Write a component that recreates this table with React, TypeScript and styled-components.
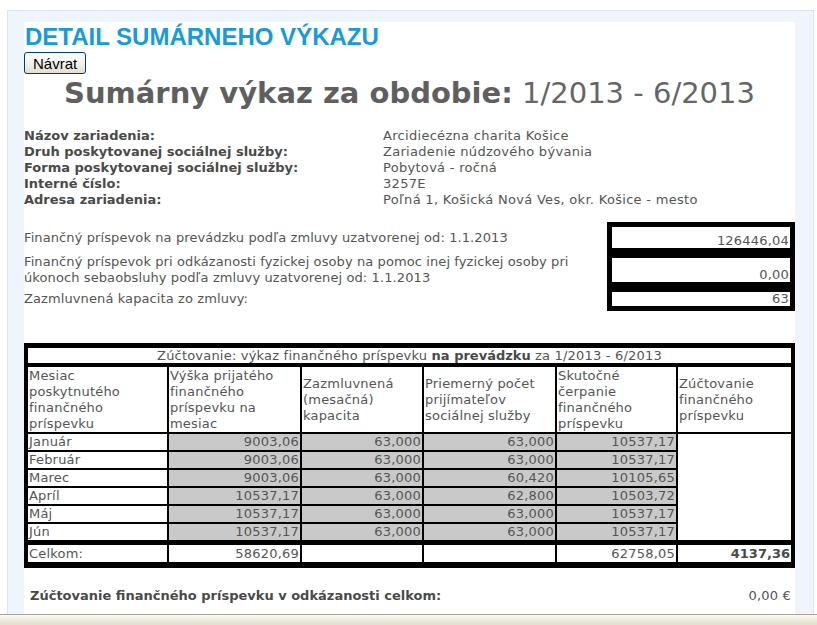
import React from "react";
import styled, { createGlobalStyle } from "styled-components";

const Global = createGlobalStyle`
  html, body { margin: 0; padding: 0; background: #ffffff; }
  body { font-family: "DejaVu Sans", Verdana, sans-serif; }
  #root { height: 100vh; }
`;

const Screen = styled.div`
  height: 100vh;
  display: flex;
  flex-direction: column;
  overflow: hidden;
`;

const Panel = styled.div`
  flex: 1;
  min-height: 0;
  margin: 10px 3px 0 7px;
  border: 1px solid #dce3ea;
  border-bottom: none;
  background: #eef5fc;
  padding: 11px 18px 0 16px;
  display: flex;
  flex-direction: column;
`;

const Content = styled.div`
  flex: 1;
  background: #ffffff;
  color: #555555;
  font-size: 13px;
  line-height: 16px;
  letter-spacing: 0.2px;
`;

const Heading = styled.h1`
  margin: 0;
  padding: 2px 0 0 1px;
  font-family: "Liberation Sans", Arial, sans-serif;
  font-size: 24px;
  line-height: 26px;
  font-weight: bold;
  letter-spacing: 0;
  color: #1a9ad6;
`;

const BackButton = styled.button`
  display: block;
  margin: 2px 0 0 0;
  height: 22px;
  padding: 0 8px;
  font-family: "Liberation Sans", Arial, sans-serif;
  font-size: 15px;
  letter-spacing: 0;
  color: #000;
  border: 1px solid #003c74;
  border-radius: 3px;
  background: linear-gradient(#ffffff 0%, #f3f2ec 50%, #e2ddd0 100%);
  cursor: pointer;
`;

const Title = styled.h2`
  margin: 2px 0 0 0;
  text-align: center;
  font-size: 29px;
  line-height: 34px;
  letter-spacing: 0;
  color: #666666;
  font-weight: normal;
  & b { font-weight: bold; color: #5f5f5f; }
`;

const Info = styled.div`
  margin-top: 18px;
  display: grid;
  grid-template-columns: 359px 1fr;
  line-height: 16px;
`;

const InfoLabel = styled.div`
  font-weight: bold;
  letter-spacing: 0;
  color: #4a4a4a;
`;

const InfoValue = styled.div`
  color: #555555;
  letter-spacing: 0.3px;
`;

const FinTable = styled.table`
  margin-top: 14px;
  width: 100%;
  border-collapse: separate;
  border-spacing: 0;
`;

const FinLabel = styled.td`
  padding: 0;
  vertical-align: middle;
  color: #555555;
  line-height: 16px;
  letter-spacing: 0.1px;
`;

const FinValue = styled.td<{ $h: number }>`
  width: 177px;
  height: ${(p) => p.$h}px;
  padding: 0 1px 0 0;
  border: 5px solid #000;
  text-align: right;
  vertical-align: bottom;
  line-height: 14px;
  color: #555555;
  background: #fff;
`;

const MainTable = styled.table`
  margin-top: 32px;
  width: 100%;
  table-layout: fixed;
  border-collapse: separate;
  border-spacing: 0;
  border-style: solid;
  border-color: #000;
  border-width: 4px 3px 5px 3px;
  color: #555555;
`;

const Cell = styled.td<{
  $align?: "left" | "right" | "center";
  $gray?: boolean;
  $bold?: boolean;
  $total?: boolean;
}>`
  border: 1px solid #000;
  ${(p) => (p.$total ? "border-top-width: 4px; height: 17px;" : "height: 16px;")}
  padding: 0 1px 0 1px;
  line-height: 16px;
  text-align: ${(p) => p.$align || "left"};
  background: ${(p) => (p.$gray ? "#c9c9c9" : "#ffffff")};
  font-weight: ${(p) => (p.$bold ? "bold" : "normal")};
  letter-spacing: ${(p) => (p.$bold ? "0" : "0.2px")};
  color: ${(p) => (p.$bold ? "#4a4a4a" : "#555555")};
  white-space: nowrap;
  overflow: hidden;
`;

const CaptionCell = styled.td`
  border: 1px solid #000;
  border-bottom-width: 3px;
  padding: 0;
  height: 15px;
  line-height: 15px;
  text-align: center;
  & b { color: #4a4a4a; letter-spacing: 0; }
`;

const HeadCell = styled.td`
  border: 1px solid #000;
  padding: 0 1px;
  height: 65px;
  line-height: 16px;
  vertical-align: middle;
  text-align: left;
  overflow: hidden;
`;

const EmptyTall = styled.td`
  border: 1px solid #000;
  background: #fff;
`;

const Summary = styled.div`
  margin-top: 20px;
  display: flex;
  justify-content: space-between;
  padding: 0 4px 0 6px;
  line-height: 16px;
`;

const SummaryLabel = styled.span`
  font-weight: bold;
  letter-spacing: 0;
  color: #4a4a4a;
`;

const SummaryValue = styled.span`
  color: #555555;
`;

const StatusBar = styled.div`
  height: 10px;
  flex: none;
  border-top: 1px solid #a9a596;
  background: linear-gradient(#fbfaf6 0%, #ece9d8 60%, #e3dfcf 100%);
`;

const info: [string, string][] = [
  ["Názov zariadenia:", "Arcidiecézna charita Košice"],
  ["Druh poskytovanej sociálnej služby:", "Zariadenie núdzového bývania"],
  ["Forma poskytovanej sociálnej služby:", "Pobytová - ročná"],
  ["Interné číslo:", "3257E"],
  ["Adresa zariadenia:", "Poľná 1, Košická Nová Ves, okr. Košice - mesto"],
];

const months: [string, string, string, string, string][] = [
  ["Január", "9003,06", "63,000", "63,000", "10537,17"],
  ["Február", "9003,06", "63,000", "63,000", "10537,17"],
  ["Marec", "9003,06", "63,000", "60,420", "10105,65"],
  ["Apríl", "10537,17", "63,000", "62,800", "10503,72"],
  ["Máj", "10537,17", "63,000", "63,000", "10537,17"],
  ["Jún", "10537,17", "63,000", "63,000", "10537,17"],
];

export default function App() {
  return (
    <Screen>
      <Global />
      <Panel>
        <Content>
          <Heading>DETAIL SUMÁRNEHO VÝKAZU</Heading>
          <BackButton type="button">Návrat</BackButton>
          <Title>
            <b>Sumárny výkaz za obdobie:</b> 1/2013 - 6/2013
          </Title>

          <Info>
            {info.map(([l, v]) => (
              <React.Fragment key={l}>
                <InfoLabel>{l}</InfoLabel>
                <InfoValue>{v}</InfoValue>
              </React.Fragment>
            ))}
          </Info>

          <FinTable>
            <tbody>
              <tr>
                <FinLabel>
                  Finančný príspevok na prevádzku podľa zmluvy uzatvorenej od: 1.1.2013
                </FinLabel>
                <FinValue $h={21}>126446,04</FinValue>
              </tr>
              <tr>
                <FinLabel>
                  Finančný príspevok pri odkázanosti fyzickej osoby na pomoc inej fyzickej osoby pri
                  <br />
                  úkonoch sebaobsluhy podľa zmluvy uzatvorenej od: 1.1.2013
                </FinLabel>
                <FinValue $h={24}>0,00</FinValue>
              </tr>
              <tr>
                <FinLabel>Zazmluvnená kapacita zo zmluvy:</FinLabel>
                <FinValue $h={14}>63</FinValue>
              </tr>
            </tbody>
          </FinTable>

          <MainTable>
            <colgroup>
              <col style={{ width: 141 }} />
              <col style={{ width: 133 }} />
              <col style={{ width: 122 }} />
              <col style={{ width: 133 }} />
              <col style={{ width: 121 }} />
              <col />
            </colgroup>
            <tbody>
              <tr>
                <CaptionCell colSpan={6}>
                  Zúčtovanie: výkaz finančného príspevku <b>na prevádzku</b> za 1/2013 - 6/2013
                </CaptionCell>
              </tr>
              <tr>
                <HeadCell>Mesiac poskytnutého finančného príspevku</HeadCell>
                <HeadCell>Výška prijatého finančného príspevku na mesiac</HeadCell>
                <HeadCell>Zazmluvnená (mesačná) kapacita</HeadCell>
                <HeadCell>Priemerný počet prijímateľov sociálnej služby</HeadCell>
                <HeadCell>Skutočné čerpanie finančného príspevku</HeadCell>
                <HeadCell>Zúčtovanie finančného príspevku</HeadCell>
              </tr>
              {months.map((m, i) => (
                <tr key={m[0]}>
                  <Cell>{m[0]}</Cell>
                  <Cell $align="right" $gray>{m[1]}</Cell>
                  <Cell $align="right" $gray>{m[2]}</Cell>
                  <Cell $align="right" $gray>{m[3]}</Cell>
                  <Cell $align="right" $gray>{m[4]}</Cell>
                  {i === 0 && <EmptyTall rowSpan={6} />}
                </tr>
              ))}
              <tr>
                <Cell $total>Celkom:</Cell>
                <Cell $total $align="right">58620,69</Cell>
                <Cell $total />
                <Cell $total />
                <Cell $total $align="right">62758,05</Cell>
                <Cell $total $align="right" $bold>4137,36</Cell>
              </tr>
            </tbody>
          </MainTable>

          <Summary>
            <SummaryLabel>Zúčtovanie finančného príspevku v odkázanosti celkom:</SummaryLabel>
            <SummaryValue>0,00 €</SummaryValue>
          </Summary>
        </Content>
      </Panel>
      <StatusBar />
    </Screen>
  );
}
